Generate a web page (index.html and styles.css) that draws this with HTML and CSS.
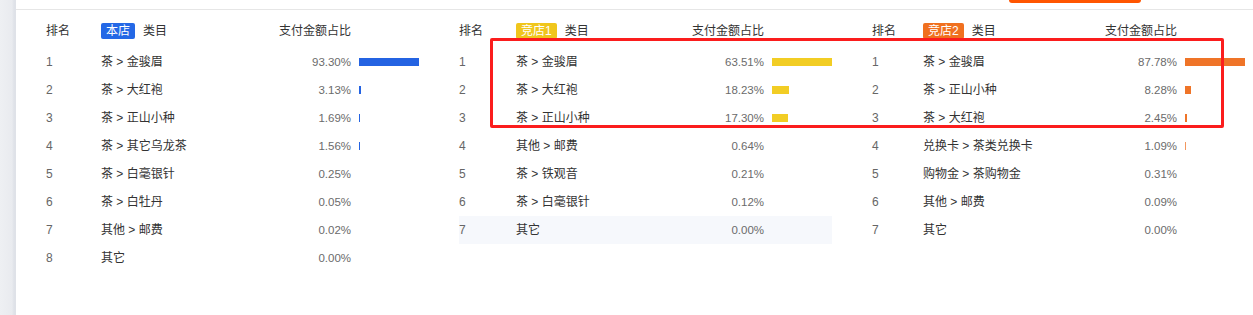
FILE: index.html
```html
<!DOCTYPE html>
<html lang="zh-CN">
<head>
<meta charset="utf-8">
<title>类目排名</title>
<link rel="stylesheet" href="styles.css">
</head>
<body>
<div class="page">
  <div class="side"></div>
  <div class="main">
    <div class="topbar"><div class="top-btn"></div></div>
    <div class="tables">
      <div class="rank-table t1">
        <div class="row head"><span class="c-rank">排名</span><span class="c-cat"><span class="badge b-blue">本店</span>类目</span><span class="c-pct">支付金额占比</span><span class="c-bar"></span></div>
        <div class="row"><span class="c-rank">1</span><span class="c-cat">茶 &gt; 金骏眉</span><span class="c-pct">93.30%</span><span class="c-bar"><i class="bar blue" style="width:60px"></i></span></div>
        <div class="row"><span class="c-rank">2</span><span class="c-cat">茶 &gt; 大红袍</span><span class="c-pct">3.13%</span><span class="c-bar"><i class="bar blue" style="width:2px"></i></span></div>
        <div class="row"><span class="c-rank">3</span><span class="c-cat">茶 &gt; 正山小种</span><span class="c-pct">1.69%</span><span class="c-bar"><i class="bar blue" style="width:1px"></i></span></div>
        <div class="row"><span class="c-rank">4</span><span class="c-cat">茶 &gt; 其它乌龙茶</span><span class="c-pct">1.56%</span><span class="c-bar"><i class="bar blue" style="width:1px"></i></span></div>
        <div class="row"><span class="c-rank">5</span><span class="c-cat">茶 &gt; 白毫银针</span><span class="c-pct">0.25%</span><span class="c-bar"></span></div>
        <div class="row"><span class="c-rank">6</span><span class="c-cat">茶 &gt; 白牡丹</span><span class="c-pct">0.05%</span><span class="c-bar"></span></div>
        <div class="row"><span class="c-rank">7</span><span class="c-cat">其他 &gt; 邮费</span><span class="c-pct">0.02%</span><span class="c-bar"></span></div>
        <div class="row"><span class="c-rank">8</span><span class="c-cat">其它</span><span class="c-pct">0.00%</span><span class="c-bar"></span></div>
      </div>
      <div class="rank-table t2">
        <div class="row head"><span class="c-rank">排名</span><span class="c-cat"><span class="badge b-yellow">竞店1</span>类目</span><span class="c-pct">支付金额占比</span><span class="c-bar"></span></div>
        <div class="row"><span class="c-rank">1</span><span class="c-cat">茶 &gt; 金骏眉</span><span class="c-pct">63.51%</span><span class="c-bar"><i class="bar yellow" style="width:60px"></i></span></div>
        <div class="row"><span class="c-rank">2</span><span class="c-cat">茶 &gt; 大红袍</span><span class="c-pct">18.23%</span><span class="c-bar"><i class="bar yellow" style="width:17px"></i></span></div>
        <div class="row"><span class="c-rank">3</span><span class="c-cat">茶 &gt; 正山小种</span><span class="c-pct">17.30%</span><span class="c-bar"><i class="bar yellow" style="width:16px"></i></span></div>
        <div class="row"><span class="c-rank">4</span><span class="c-cat">其他 &gt; 邮费</span><span class="c-pct">0.64%</span><span class="c-bar"></span></div>
        <div class="row"><span class="c-rank">5</span><span class="c-cat">茶 &gt; 铁观音</span><span class="c-pct">0.21%</span><span class="c-bar"></span></div>
        <div class="row"><span class="c-rank">6</span><span class="c-cat">茶 &gt; 白毫银针</span><span class="c-pct">0.12%</span><span class="c-bar"></span></div>
        <div class="row hover"><span class="c-rank">7</span><span class="c-cat">其它</span><span class="c-pct">0.00%</span><span class="c-bar"></span></div>
      </div>
      <div class="rank-table t3">
        <div class="row head"><span class="c-rank">排名</span><span class="c-cat"><span class="badge b-orange">竞店2</span>类目</span><span class="c-pct">支付金额占比</span><span class="c-bar"></span></div>
        <div class="row"><span class="c-rank">1</span><span class="c-cat">茶 &gt; 金骏眉</span><span class="c-pct">87.78%</span><span class="c-bar"><i class="bar orange" style="width:60px"></i></span></div>
        <div class="row"><span class="c-rank">2</span><span class="c-cat">茶 &gt; 正山小种</span><span class="c-pct">8.28%</span><span class="c-bar"><i class="bar orange" style="width:6px"></i></span></div>
        <div class="row"><span class="c-rank">3</span><span class="c-cat">茶 &gt; 大红袍</span><span class="c-pct">2.45%</span><span class="c-bar"><i class="bar orange" style="width:2px"></i></span></div>
        <div class="row"><span class="c-rank">4</span><span class="c-cat">兑换卡 &gt; 茶类兑换卡</span><span class="c-pct">1.09%</span><span class="c-bar"><i class="bar orange thin" style="width:1px"></i></span></div>
        <div class="row"><span class="c-rank">5</span><span class="c-cat">购物金 &gt; 茶购物金</span><span class="c-pct">0.31%</span><span class="c-bar"></span></div>
        <div class="row"><span class="c-rank">6</span><span class="c-cat">其他 &gt; 邮费</span><span class="c-pct">0.09%</span><span class="c-bar"></span></div>
        <div class="row"><span class="c-rank">7</span><span class="c-cat">其它</span><span class="c-pct">0.00%</span><span class="c-bar"></span></div>
      </div>
      <div class="highlight-box"></div>
    </div>
  </div>
</div>
</body>
</html>
```
FILE: styles.css
```css
html, body {
  margin: 0;
  padding: 0;
  background: #ffffff;
}
body {
  font-family: "Liberation Sans", "Noto Sans CJK SC", sans-serif;
  font-size: 12px;
  color: #333333;
}
.page {
  display: flex;
  height: 315px;
  overflow: hidden;
}
.side {
  width: 16px;
  flex: none;
  background: linear-gradient(to right, #eef0f3 0, #e9ebef 12px, #dfe2e8 14px, #dfe2e8 16px);
}
.main {
  flex: 1;
  min-width: 0;
}
.topbar {
  height: 9px;
  border-bottom: 1px solid #e6e6e6;
  padding-left: 993px;
}
.top-btn {
  width: 132px;
  height: 3px;
  background: #ff5500;
  border-radius: 0 0 3px 3px;
}
.tables {
  position: relative;
  display: flex;
  gap: 40px;
  padding: 7px 0 0 30px;
}
.rank-table {
  width: 373px;
  flex: none;
}
.t1 { --rank: 55px; }
.t2 { --rank: 57px; }
.t3 { --rank: 51px; }
.row {
  display: grid;
  grid-template-columns: var(--rank) 1fr 90px 68px;
  align-items: center;
  height: 28px;
  line-height: 16px;
}
.row.head {
  margin-bottom: 3px;
  color: #333333;
}
.row.hover {
  background: #f6f8fc;
}
.c-rank {
  color: #666666;
}
.head .c-rank {
  color: #333333;
}
.c-cat {
  color: #333333;
  display: flex;
  align-items: center;
  white-space: nowrap;
}
.c-pct {
  text-align: right;
  color: #6b6b6b;
  font-size: 11.5px;
}
.head .c-pct {
  color: #333333;
  font-size: 12px;
}
.c-bar {
  padding-left: 8px;
  display: flex;
  align-items: center;
  height: 8px;
}
.bar {
  display: block;
  height: 8px;
}
.bar.thin { opacity: 0.75; }
.blue { background: #2463e2; }
.yellow { background: #f2cd24; }
.orange { background: #ef7428; }
.badge {
  display: inline-block;
  height: 16px;
  line-height: 16px;
  padding: 0 5px;
  margin-right: 8px;
  border-radius: 2px;
  color: #ffffff;
  font-size: 12px;
}
.b-blue { background: #2468e6; }
.b-yellow { background: #f0c61c; }
.b-orange { background: #f0701f; }
.highlight-box {
  position: absolute;
  left: 474px;
  top: 28px;
  width: 728px;
  height: 84px;
  border: 3px solid #fb1d1d;
  border-radius: 2px;
}
```
